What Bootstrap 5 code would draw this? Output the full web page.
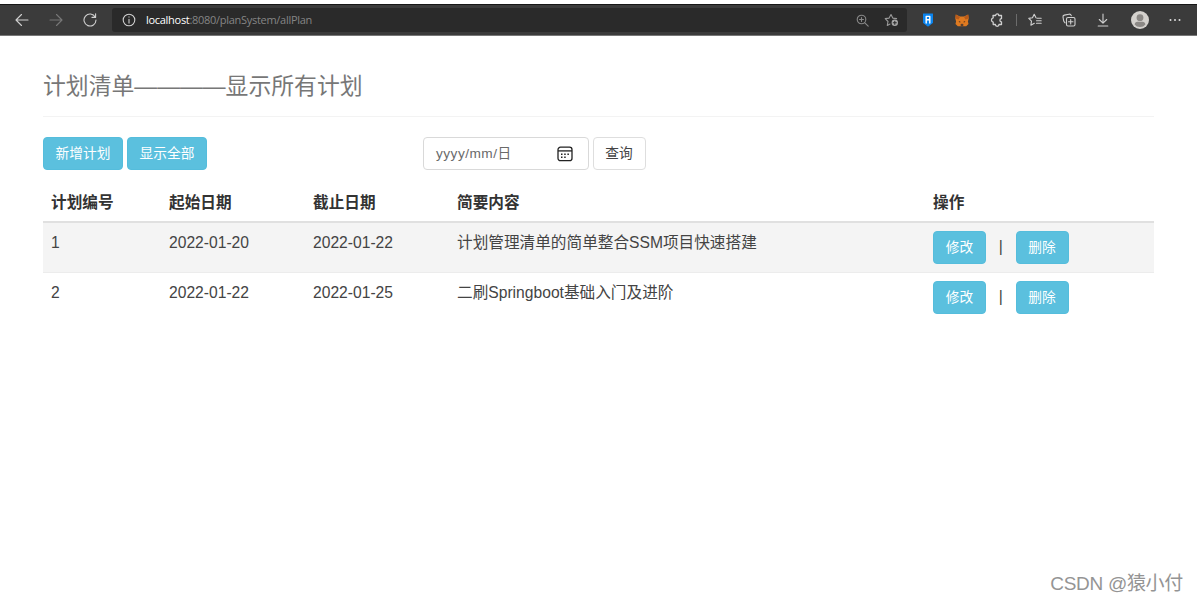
<!DOCTYPE html>
<html lang="zh-CN">
<head>
<meta charset="utf-8">
<title>计划清单</title>
<link rel="stylesheet" href="https://cdn.jsdelivr.net/npm/bootstrap@5.3.0/dist/css/bootstrap.min.css">
<style>
body{font-family:"Liberation Sans","Noto Sans CJK SC",sans-serif;font-size:15.65px;line-height:22px;color:#3c3c3c;height:602px;overflow:hidden}
.browser{height:32px;margin:4px 1px 0 0;background:#3b3b3b;border-top:1px solid #171717;border-bottom:1px solid #777;padding-left:5px}
.tool{width:34px;height:30px;flex:none;display:flex;align-items:center;justify-content:center}
.browser svg{fill:none;stroke:#d0d0d0;stroke-width:1.1;stroke-linecap:round;stroke-linejoin:round;display:block}
.address{width:795px;height:24px;margin-left:5px;margin-right:4px;background:#2a2a2a;border-radius:3px;font:11px/24px "Open Sans","Noto Sans",sans-serif;letter-spacing:-.29px;color:#858585}
.address .tool{height:24px;width:29px}
.address .info{width:30px;margin-left:2px;margin-right:2px}
.address b{font-weight:400;color:#fff}
.divider{width:1px;height:12px;background:#6c6c6c;margin:0 1.5px}
.page{padding:34px 44px 0 43px}
.title-line{font-size:22.83px;line-height:32px;color:#777;margin:0;padding-bottom:14px;border-bottom:1px solid #f3f3f3;height:47px}
.actions{margin-top:20px;height:33px}
.btn{--bs-btn-font-size:13.7px;--bs-btn-line-height:19px;--bs-btn-padding-x:11.5px;--bs-btn-padding-y:6px;--bs-btn-border-radius:4px;height:33px}
.btn-plan{--bs-btn-color:#fff;--bs-btn-bg:#5bc0de;--bs-btn-border-color:#55bddc;--bs-btn-hover-bg:#46b8da;--bs-btn-hover-color:#fff}
.btn-query{--bs-btn-color:#444;--bs-btn-bg:#fff;--bs-btn-border-color:#dedede;width:53px}
.w-add{width:80px}.w-op{width:53px}
.date-box{width:165.5px;height:33px;border:1px solid #d9d9d9;border-radius:4px;margin-left:216px;padding:0 14.5px 0 12px;font-size:13.7px;color:#6a6a6a;letter-spacing:.46px}
.plans{table-layout:fixed;margin:12px 0 0;--bs-table-color:#444;--bs-table-striped-color:#444;--bs-table-striped-bg:#f4f4f4;--bs-table-border-color:#ececec}
.plans>:not(caption)>*>*{padding:8px}
.plans>thead>tr>th{height:40px;border-bottom:2px solid #e0e0e0;padding-bottom:7px;color:#333}
.plans>tbody>tr>td{height:50px;line-height:24px}
.plans>tbody>tr:last-child>td{border-bottom:0}
.bar{width:29.5px;text-align:center;line-height:31px}
.watermark{right:15px;bottom:5px;font-size:19px;line-height:27px;color:#949494;letter-spacing:-.3px}
</style>
</head>
<body class="position-relative bg-white">
<nav class="browser d-flex align-items-center">
  <span class="tool"><svg width="14" height="14" viewBox="0 0 14 14"><path d="M13 7H1M6.500 1.500 1 7l5.500 5.500"/></svg></span>
  <span class="tool"><svg width="14" height="14" viewBox="0 0 14 14" style="stroke:#777"><path d="M1 7h12M7.500 1.500 13 7l-5.500 5.500"/></svg></span>
  <span class="tool"><svg width="14" height="14" viewBox="0 0 14 14"><path d="M12.300 4.200A6 6 0 1 0 13 7M12.600.8v3.600H9"/></svg></span>
  <div class="address d-flex align-items-center">
    <span class="tool info"><svg width="14" height="14" viewBox="0 0 14 14"><circle cx="7" cy="7" r="5.800"/><path d="M7 6.300v3.800M7 3.900v.2"/></svg></span>
    <span class="flex-grow-1"><b>localhost</b>:8080/planSystem/allPlan</span>
    <span class="tool"><svg width="13" height="13" viewBox="0 0 13 13" style="stroke:#888"><circle cx="5.500" cy="5.500" r="4.300"/><path d="m8.800 8.800 3.400 3.400M3.500 5.500h4M5.500 3.500v4"/></svg></span>
    <span class="tool"><svg width="15" height="14" viewBox="0 0 15 14" style="stroke:#999"><path d="M6 11 3.300 12.400 4 8.500 1.200 5.600l3.900-.5L7 1.500l1.800 3.600 3.800.5"/><circle cx="10.800" cy="9.700" r="3.200" fill="#a8a8a8" stroke="none"/><path d="M9.300 9.700h3M10.800 8.200v3" stroke="#2a2a2a"/></svg></span>
    <span style="width:1px"></span>
  </div>
  <span class="tool"><svg width="10" height="14" viewBox="0 0 10 14"><path d="M.5 1h9v8.500L5 13 .5 9.500z" fill="#0b84ee" stroke="#0b84ee"/><path d="M3.200 10V3.400h3.600V10M3.200 6.800h3.600" stroke="#fff" stroke-width="1.400"/></svg></span>
  <span class="tool"><svg width="14" height="13" viewBox="0 0 14 13" style="stroke:none"><path d="M.8.500 5 2.500h4L13.200.500l.5 4-.8 3 .6 2.500-2.300 2.300H2.800L.5 10l.6-2.500-.8-3z" fill="#df7a20"/><path d="M.8.500 5 3 3.500 5.500.300 4.500zM13.200.500 9 3l1.500 2.500 3.200-1z" fill="#b95b1b"/><path d="m3.500 7 2 .8-.5 1zM10.500 7l-2 .8.5 1z" fill="#33251e"/><path d="m5.500 10.500 1-.8h1l1 .8-.4 1.700H5.900z" fill="#59402f"/></svg></span>
  <span class="tool" style="margin-left:1px"><svg width="14" height="14" viewBox="0 0 14 14" style="stroke-width:1.300"><path d="M3 2.500h2.600a1.600 1.600 0 0 1 3.200 0h2.700v3.100a1.600 1.600 0 0 0 0 3.200v2.700H9a1.800 1.800 0 0 1-3.600 0H3.200V9.200a2.200 2.200 0 0 1 0-4.300z"/></svg></span>
  <span class="divider"></span>
  <span class="tool"><svg width="14" height="14" viewBox="0 0 14 14"><path d="M8 4.800 6.200 1.300 4.500 4.800.8 5.400l2.700 2.800-.6 4L6.300 10.300M9 5.200h4.200M8.500 7.700h4.700M8.500 10.200h4.700"/></svg></span>
  <span class="tool"><svg width="14" height="14" viewBox="0 0 14 14"><rect x="4.500" y="4.500" width="8.500" height="8.500" rx="1.500"/><path d="M8.700 6.500v4.500M6.500 8.700H11M3 9.800A4 4 0 0 1 1.500 7L1 4Q.8 2.400 2.300 2.100L7 1.200q1.700-.3 2.300 1.500"/></svg></span>
  <span class="tool"><svg width="12" height="14" viewBox="0 0 12 14"><path d="M6 1v9M2.300 6.500 6 10.200l3.700-3.700M1.200 13h9.600"/></svg></span>
  <span class="tool" style="margin:0 1px 0 3px"><svg width="18" height="18" viewBox="0 0 18 18" style="stroke:none"><circle cx="9" cy="9" r="9" fill="#d4d1cd"/><circle cx="9" cy="6.700" r="3.400" fill="#8b8885"/><path d="M3.600 13.500Q4 10.800 6.500 10.800h5q2.500 0 2.900 2.700Q12.500 16 9 16t-5.400-2.500" fill="#8b8885"/></svg></span>
  <span class="tool"><svg width="12" height="4" viewBox="0 0 12 4" style="stroke:none;fill:#ddd"><circle cx="1.500" cy="2" r="1"/><circle cx="6" cy="2" r="1"/><circle cx="10.500" cy="2" r="1"/></svg></span>
</nav>
<main class="page">
  <h1 class="title-line fw-normal">计划清单————显示所有计划</h1>
  <div class="actions d-flex">
    <a class="btn btn-plan w-add px-0 me-1" href="#">新增计划</a>
    <a class="btn btn-plan w-add px-0" href="#">显示全部</a>
    <div class="date-box d-flex align-items-center justify-content-between me-1"><span>yyyy/mm/日</span>
      <svg width="16" height="16" viewBox="0 0 16 16" fill="none" stroke="#222" stroke-width="1.300"><rect x="1" y="1.200" width="14" height="13.500" rx="2.500"/><path d="M1 4.900h14"/><path d="M4 8.200h1.500M7.200 8.200h1.500M10.400 8.200h1.500M4 11.200h1.500M7.200 11.200h1.500" stroke-width="1.600"/></svg>
    </div>
    <button class="btn btn-query px-0" type="button">查询</button>
  </div>
  <table class="table table-striped plans">
    <colgroup><col style="width:118px"><col style="width:144px"><col style="width:144px"><col style="width:476px"><col></colgroup>
    <thead><tr><th>计划编号</th><th>起始日期</th><th>截止日期</th><th>简要内容</th><th>操作</th></tr></thead>
    <tbody>
      <tr><td>1</td><td>2022-01-20</td><td>2022-01-22</td><td>计划管理清单的简单整合SSM项目快速搭建</td><td><div class="d-flex"><a class="btn btn-plan w-op px-0" href="#">修改</a><span class="bar">|</span><a class="btn btn-plan w-op px-0" href="#">删除</a></div></td></tr>
      <tr><td>2</td><td>2022-01-22</td><td>2022-01-25</td><td>二刷Springboot基础入门及进阶</td><td><div class="d-flex"><a class="btn btn-plan w-op px-0" href="#">修改</a><span class="bar">|</span><a class="btn btn-plan w-op px-0" href="#">删除</a></div></td></tr>
    </tbody>
  </table>
</main>
<div class="watermark position-absolute">CSDN @猿小付</div>
<script src="https://cdn.jsdelivr.net/npm/bootstrap@5.3.0/dist/js/bootstrap.bundle.min.js"></script>
</body>
</html>
